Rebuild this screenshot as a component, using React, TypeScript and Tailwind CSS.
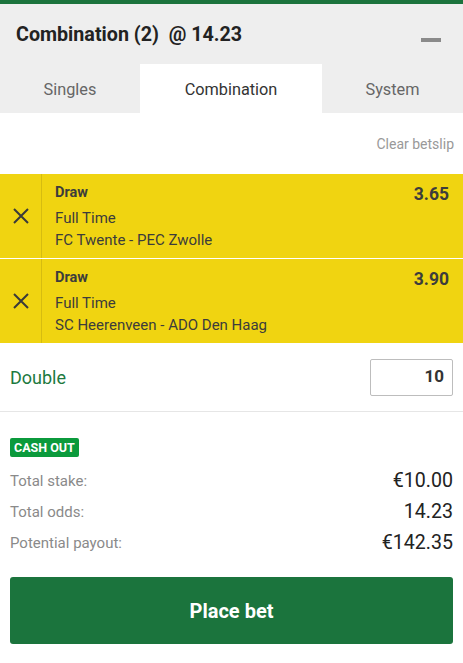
import React from 'react';

interface Selection {
  pick: string;
  market: string;
  event: string;
  odds: string;
}

const selections: Selection[] = [
  { pick: 'Draw', market: 'Full Time', event: 'FC Twente - PEC Zwolle', odds: '3.65' },
  { pick: 'Draw', market: 'Full Time', event: 'SC Heerenveen - ADO Den Haag', odds: '3.90' },
];

const totals = [
  { label: 'Total stake:', value: '€10.00' },
  { label: 'Total odds:', value: '14.23' },
  { label: 'Potential payout:', value: '€142.35' },
];

const CloseIcon = () => (
  <svg width="16" height="16" viewBox="0 0 16 16" fill="none" stroke="#3a3a3a" strokeWidth="2">
    <path d="M1 1 L15 15 M15 1 L1 15" />
  </svg>
);

const App: React.FC = () => {
  return (
    <div className="w-[463px] h-[663px] bg-white font-['Roboto',sans-serif] overflow-hidden">
      <div className="h-[4px] bg-[#1b733d]" />

      {/* header */}
      <div className="bg-[#eeeeee]">
        <div className="h-[60px] flex items-center justify-between pl-[16px] pr-[22px]">
          <span className="text-[19.7px] font-bold text-[#222] pt-[1px]">Combination (2)&nbsp; @ 14.23</span>
          <span className="w-[20px] h-[4px] bg-[#8a8a8a] mt-[11px]" />
        </div>
        <div className="flex h-[49px] text-[16.3px] pt-[3px]">
          <div className="w-[140px] flex items-center justify-center text-[#666]">Singles</div>
          <div className="w-[182px] flex items-center justify-center bg-white text-[#333] -mt-[3px] pt-[3px]">Combination</div>
          <div className="flex-1 flex items-center justify-center text-[#666]">System</div>
        </div>
      </div>

      <div className="h-[61px] flex items-center justify-end pr-[9px] pt-[1px]">
        <span className="text-[14px] text-[#999]">Clear betslip</span>
      </div>

      {/* selections */}
      <div className="flex flex-col gap-[1px]">
        {selections.map((s) => (
          <div key={s.event} className="h-[84px] bg-[#f0d411] flex">
            <div className="w-[42px] flex items-center justify-center border-r border-[#d6bc10]">
              <CloseIcon />
            </div>
            <div className="flex-1 pl-[13px] pr-[14px] pt-[10px] flex justify-between text-[#3c3c3c]">
              <div className="flex flex-col">
                <span className="text-[14.5px] font-bold leading-[18px]">{s.pick}</span>
                <span className="text-[15px] leading-[18px] mt-[7px]">{s.market}</span>
                <span className="text-[15px] leading-[18px] mt-[4px]">{s.event}</span>
              </div>
              <span className="text-[17.5px] font-bold leading-[18px] mt-[1px]">{s.odds}</span>
            </div>
          </div>
        ))}
      </div>

      {/* stake */}
      <div className="h-[69px] flex items-center justify-between pl-[10px] pr-[10px] border-b border-[#e6e6e6]">
        <span className="text-[18px] text-[#1d7a3f]">Double</span>
        <div className="w-[83px] h-[37px] border border-[#bdbdbd] rounded-[2px] flex items-center justify-end pr-[8px]">
          <span className="text-[17px] font-bold text-[#333]">10</span>
        </div>
      </div>

      {/* summary */}
      <div className="px-[10px] pt-[23px]">
        <span className="inline-block bg-[#0b9a3c] text-white text-[12.5px] font-bold leading-[19px] px-[4px] rounded-[2px]">
          CASH OUT
        </span>
        <div className="flex flex-col mt-[11px] gap-[9px]">
          {totals.map((t) => (
            <div key={t.label} className="flex items-center justify-between h-[22px]">
              <span className="text-[15px] text-[#8a8a8a]">{t.label}</span>
              <span className="text-[19.6px] text-[#222]">{t.value}</span>
            </div>
          ))}
        </div>

        <button className="mt-[23px] w-full h-[67px] bg-[#1b743d] rounded-[3px] text-white text-[20px] font-bold">
          Place bet
        </button>
      </div>
    </div>
  );
};

export default App;
